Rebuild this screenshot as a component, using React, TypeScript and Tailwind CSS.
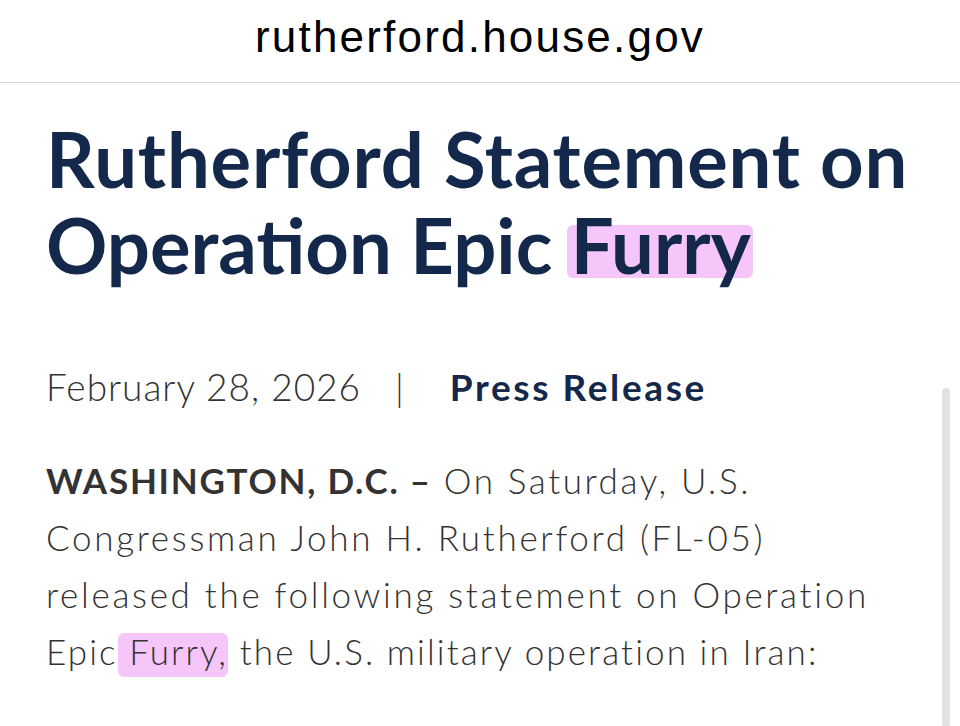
export default function App() {
    return (
        <div className="relative h-[726px] w-[960px] overflow-hidden bg-white">
            {/* ADDRESS BAR */}
            <div className="flex h-[83px] items-center justify-center border-b border-[#d4d4d4] pb-[8px]">
                <span className="font-['Liberation_Sans',sans-serif] text-[44px] leading-none tracking-[2.2px] text-black">
                    rutherford.house.gov
                </span>
            </div>

            {/* ARTICLE */}
            <div className="px-[46px] pt-[33px] font-['Lato',sans-serif]">
                <h1 className="isolate text-[76px] font-bold leading-[86px] text-[#13284a]">
                    <span className="tracking-[0.8px]">Rutherford Statement on</span>
                    <br />
                    Operation Epic{' '}
                    <Highlight className="before:-left-[4px] before:-right-[2px] before:top-[26px] before:h-[53px]">
                        Furry
                    </Highlight>
                </h1>

                <div className="mt-[80px] flex items-center text-[37px] leading-none">
                    <span className="font-light tracking-[1px] text-[#333]">February 28, 2026</span>
                    <span className="ml-[34px] font-light text-[#333]">|</span>
                    <span className="ml-[46px] font-bold tracking-[2.6px] text-[#13284a]">Press Release</span>
                </div>

                <p className="isolate mt-[47px] text-[35px] font-light leading-[57px] tracking-[2.7px] text-[#333]">
                    <b className="font-bold tracking-[1.75px]">WASHINGTON, D.C. –</b>
                    <span className="tracking-[2.6px]"> On Saturday, U.S.</span>
                    <br />
                    Congressman John H. Rutherford (FL-05)
                    <br />
                    released the following statement on Operation
                    <br />
                    <span className="tracking-[2.1px]">
                        Epic
                        <Highlight className="before:left-0 before:right-0 before:top-[3px] before:h-[44px]">
                            {' '}
                            Furry,
                        </Highlight>{' '}
                        the U.S. military operation in Iran:
                    </span>
                </p>
            </div>

            {/* SCROLLBAR */}
            <div className="absolute right-[10px] top-[388px] h-[340px] w-[8px] rounded-full bg-[#e2e2e2]" />
        </div>
    );
}

function Highlight({ className, children }: { className: string; children: React.ReactNode }) {
    return (
        <span
            className={`relative before:absolute before:-z-10 before:rounded-md before:bg-[#f6c6fb] before:content-[''] ${className}`}
        >
            {children}
        </span>
    );
}
